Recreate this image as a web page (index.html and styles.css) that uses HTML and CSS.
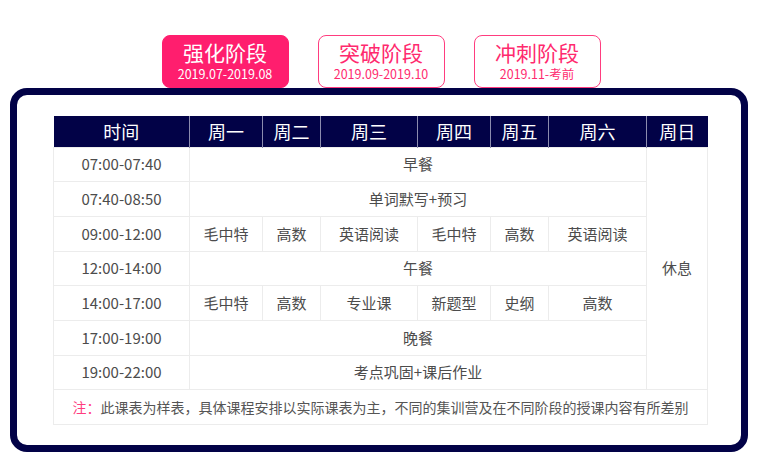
FILE: index.html
```html
<!DOCTYPE html>
<html lang="zh-CN">
<head>
<meta charset="utf-8">
<title>课程表</title>
<link rel="stylesheet" href="styles.css">
</head>
<body>
<div class="page">
  <div class="tabs">
    <div class="tab active"><div class="tab-title">强化阶段</div><div class="tab-date">2019.07-2019.08</div></div>
    <div class="tab"><div class="tab-title">突破阶段</div><div class="tab-date">2019.09-2019.10</div></div>
    <div class="tab"><div class="tab-title">冲刺阶段</div><div class="tab-date">2019.11-考前</div></div>
  </div>
  <div class="frame">
    <table class="schedule">
      <colgroup>
        <col class="c-time"><col class="c-mon"><col class="c-tue"><col class="c-wed"><col class="c-thu"><col class="c-fri"><col class="c-sat"><col class="c-sun">
      </colgroup>
      <thead>
        <tr><th>时间</th><th>周一</th><th>周二</th><th>周三</th><th>周四</th><th>周五</th><th>周六</th><th>周日</th></tr>
      </thead>
      <tbody>
        <tr><td>07:00-07:40</td><td colspan="6">早餐</td><td rowspan="7">休息</td></tr>
        <tr><td>07:40-08:50</td><td colspan="6">单词默写+预习</td></tr>
        <tr><td>09:00-12:00</td><td>毛中特</td><td>高数</td><td>英语阅读</td><td>毛中特</td><td>高数</td><td>英语阅读</td></tr>
        <tr><td>12:00-14:00</td><td colspan="6">午餐</td></tr>
        <tr><td>14:00-17:00</td><td>毛中特</td><td>高数</td><td>专业课</td><td>新题型</td><td>史纲</td><td>高数</td></tr>
        <tr><td>17:00-19:00</td><td colspan="6">晚餐</td></tr>
        <tr><td>19:00-22:00</td><td colspan="6">考点巩固+课后作业</td></tr>
        <tr class="note-row"><td colspan="8" class="note"><span class="note-mark">注：</span>此课表为样表，具体课程安排以实际课表为主，不同的集训营及在不同阶段的授课内容有所差别</td></tr>
      </tbody>
    </table>
  </div>
</div>
</body>
</html>
```
FILE: styles.css
```css
html, body {
  margin: 0;
  padding: 0;
  background: #ffffff;
}
body {
  font-family: "Noto Sans CJK SC", "Noto Sans", sans-serif;
  color: #4c4c4c;
}
.page {
  width: 759px;
  padding-top: 35px;
}
.tabs {
  display: flex;
  justify-content: center;
  gap: 29px;
  padding-left: 3px;
}
.tab {
  box-sizing: border-box;
  width: 127px;
  height: 53px;
  border: 1.5px solid #ff3d7f;
  border-radius: 8px;
  color: #ff2a6e;
  text-align: center;
  display: flex;
  flex-direction: column;
  align-items: center;
  justify-content: center;
}
.tab.active {
  background: #ff1e6e;
  border-color: #ff1e6e;
  color: #ffffff;
}
.tab-title {
  font-size: 21px;
  line-height: 22px;
  margin-top: -1px;
}
.tab-date {
  font-size: 12.5px;
  line-height: 14px;
  margin-top: 4px;
}
.frame {
  box-sizing: border-box;
  margin-left: 10px;
  width: 738px;
  height: 364px;
  border: 7px solid #020247;
  border-radius: 17px;
  padding: 21px 34px 0 36px;
}
.schedule {
  width: 654px;
  table-layout: fixed;
  border-collapse: collapse;
}
.c-time { width: 136px; }
.c-mon { width: 73px; }
.c-tue { width: 58px; }
.c-wed { width: 97px; }
.c-thu { width: 73px; }
.c-fri { width: 58px; }
.c-sat { width: 98px; }
.c-sun { width: 61px; }
.schedule th {
  background: #020247;
  color: #ffffff;
  font-weight: normal;
  font-size: 18px;
  line-height: 20px;
  height: 30.5px;
  padding: 0;
  border-left: 1px solid #8c8cae;
  border-right: 1px solid #8c8cae;
}
.schedule th:first-child { border-left: none; }
.schedule th:last-child { border-right: none; }
.schedule td {
  border: 1px solid #ececec;
  text-align: center;
  font-size: 15px;
  line-height: 18px;
  height: 33.7px;
  padding: 0;
}
.schedule td.note {
  font-size: 14px;
  color: #555555;
}
.note-mark {
  color: #ff3d7f;
}
```
